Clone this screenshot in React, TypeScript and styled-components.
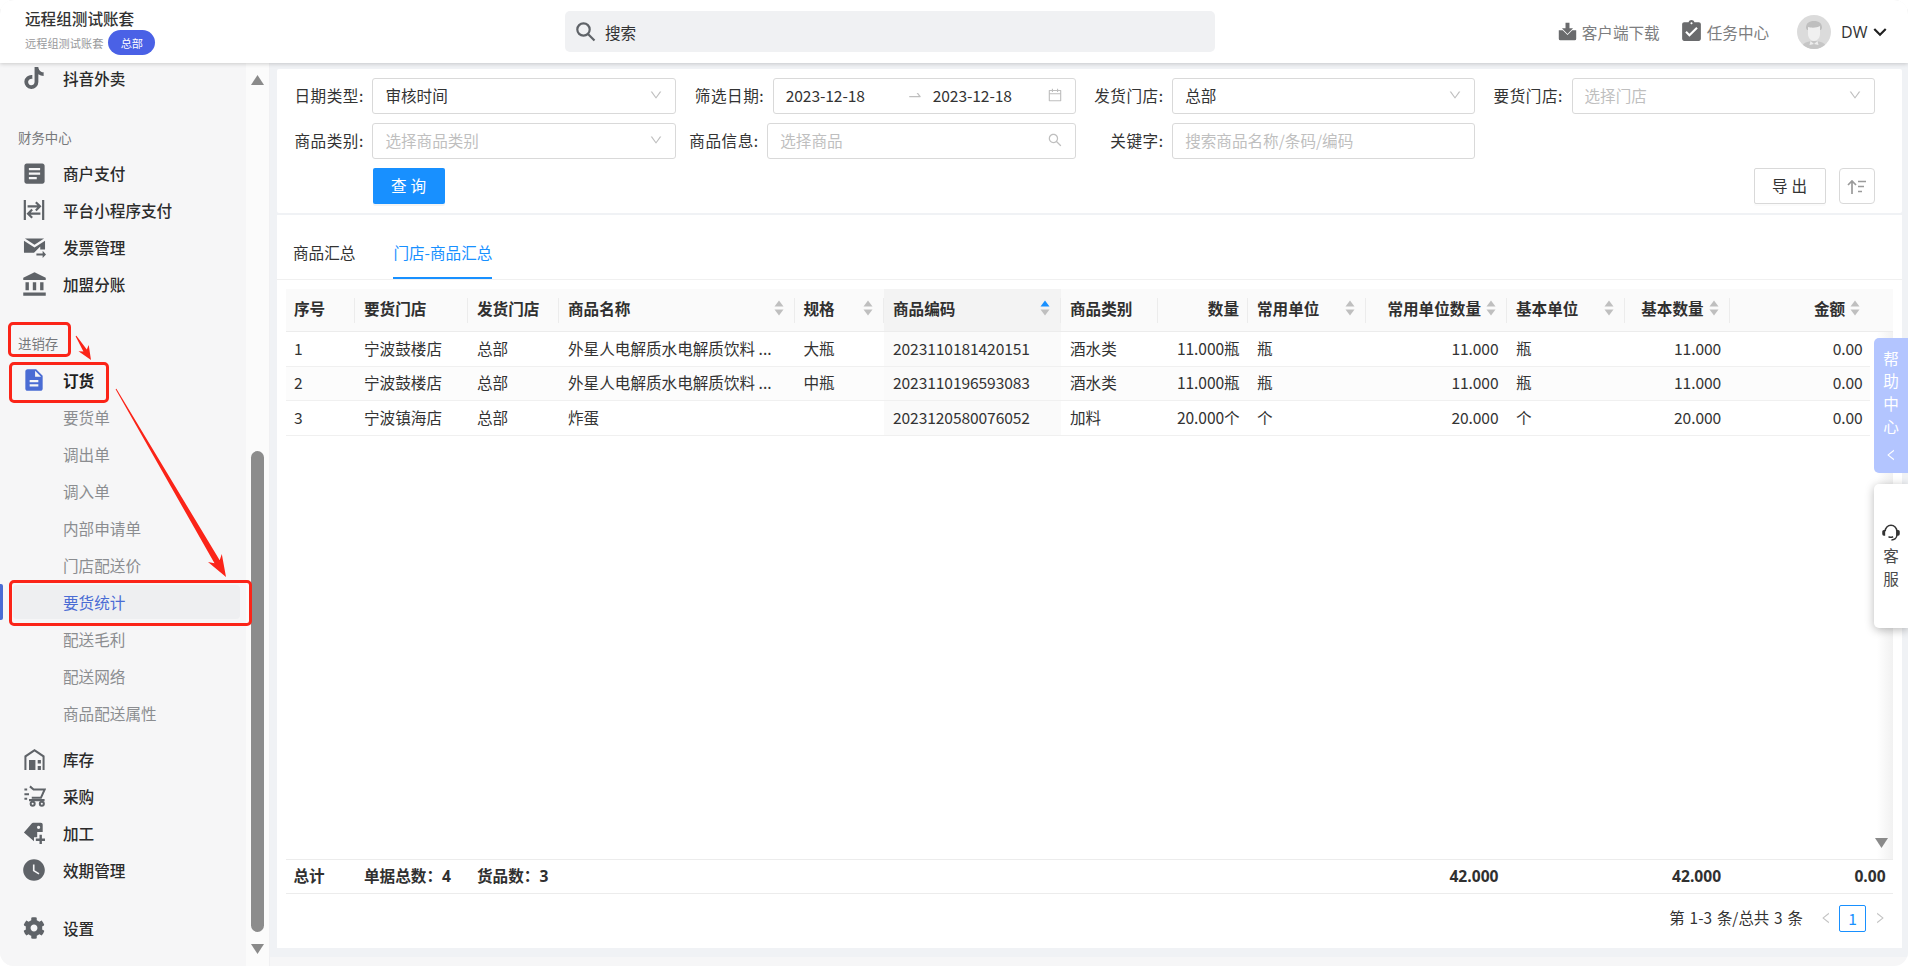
import React from "react";
import styled, { createGlobalStyle } from "styled-components";
import { FaTiktok, FaCog } from "react-icons/fa";
import {
  MdArticle,
  MdAccountBalance,
  MdDescription,
  MdWatchLater,
  MdAssignmentTurnedIn,
  MdKeyboardArrowDown,
} from "react-icons/md";
import {
  AiOutlineDown,
  AiOutlineSearch,
  AiOutlineCalendar,
  AiOutlineSwapRight,
  AiOutlineLeft,
  AiOutlineRight,
} from "react-icons/ai";

const FONT = `"Noto Sans CJK SC", "Noto Sans", sans-serif`;
const FS = "15.6px";

const Global = createGlobalStyle`
  html, body { margin: 0; padding: 0; background: #fff; overflow: hidden; }
  * { box-sizing: border-box; }
  body { font-family: ${FONT}; font-size: ${FS}; color: #262626; }
`;

const Frame = styled.div`
  position: relative;
  width: 1908px;
  height: 966px;
  background: #f6f6f7;
  border-radius: 14px;
  overflow: hidden;
  display: flex;
  flex-direction: column;
`;

/* ---------- header ---------- */
const Header = styled.header`
  position: relative;
  z-index: 2;
  flex: 0 0 63px;
  display: flex;
  align-items: flex-start;
  background: #fff;
  box-shadow: 0 1px 4px rgba(0, 0, 0, 0.18);
`;
const Brand = styled.div`
  flex: 0 0 565px;
  padding: 7px 0 0 25px;
`;
const BrandTitle = styled.div`
  font-size: 15.6px;
  line-height: 23px;
  font-weight: 500;
  color: #333;
`;
const BrandRow = styled.div`
  display: flex;
  align-items: center;
  gap: 5px;
`;
const BrandSub = styled.span`
  font-size: 11.2px;
  color: #98999b;
`;
const Badge = styled.span`
  width: 47px;
  height: 25px;
  border-radius: 13px;
  background: #4a61e6;
  color: #fff;
  font-size: 11.2px;
  display: flex;
  align-items: center;
  justify-content: center;
`;
const SearchBox = styled.div`
  flex: 0 0 650px;
  height: 41px;
  margin-top: 11px;
  background: #f0f1f3;
  border-radius: 5px;
  display: flex;
  align-items: center;
  padding-left: 10px;
  gap: 9px;
  color: #333;
  svg { color: #5f6368; }
`;
const HeaderRight = styled.div`
  margin-left: auto;
  height: 63px;
  display: flex;
  align-items: center;
  padding-right: 15.5px;
`;
const HeaderLink = styled.div<{ $gap: number; $after: number }>`
  display: flex;
  align-items: center;
  gap: ${(p) => p.$gap}px;
  margin-right: ${(p) => p.$after}px;
  color: #7d7e80;
  svg { color: #6a6b6d; flex: none; }
`;
const UserName = styled.span`
  margin-left: 10px;
  font-weight: 500;
  color: #333;
  font-family: "Open Sans", ${FONT};
  font-size: 16px;
`;
const UserChevron = styled(MdKeyboardArrowDown)`
  color: #222;
  margin-left: -1px;
`;

/* ---------- sidebar ---------- */
const Body = styled.div`
  flex: 1;
  min-height: 0;
  display: flex;
`;
const Sidebar = styled.nav`
  flex: 0 0 246px;
  overflow: hidden;
  background: #f6f6f7;
`;
const NavList = styled.div`
  margin-top: -3.5px;
`;
const NavItem = styled.div<{ $gap?: number; $strong?: boolean }>`
  height: 37px;
  margin-top: ${(p) => p.$gap ?? 0}px;
  display: flex;
  align-items: center;
  padding-left: 23px;
  font-weight: ${(p) => (p.$strong ? 700 : 500)};
  color: ${(p) => (p.$strong ? "#1f1f1f" : "#2b2b2b")};
`;
const NavIcon = styled.span<{ $blue?: boolean }>`
  flex: 0 0 22px;
  min-width: 0;
  width: 22px;
  height: 22px;
  margin-right: 18px;
  display: flex;
  align-items: center;
  justify-content: center;
  color: ${(p) => (p.$blue ? "#4a6cd4" : "#5f6368")};
  svg { flex: none; }
`;
const SectionLabel = styled.div<{ $gap: number }>`
  height: 36px;
  margin-top: ${(p) => p.$gap}px;
  padding-left: 18px;
  line-height: 36px;
  font-size: 13.4px;
  color: #76787b;
`;
const SubItem = styled.div<{ $active?: boolean }>`
  position: relative;
  height: ${(p) => (p.$active ? 34 : 37)}px;
  margin: ${(p) => (p.$active ? "1.5px 6px 1.5px 13px" : "0")};
  padding-left: ${(p) => (p.$active ? 50 : 63)}px;
  display: flex;
  align-items: center;
  border-radius: 4px;
  color: ${(p) => (p.$active ? "#4a6cd4" : "#8b8d90")};
  background: ${(p) => (p.$active ? "#eeeff1" : "transparent")};
  ${(p) =>
    p.$active
      ? `&::before { content: ""; position: absolute; left: -13px; top: -1px; bottom: -1px; width: 3px; background: #4a6cd4; border-radius: 0 2px 2px 0; }`
      : ""}
`;
const Rail = styled.div`
  flex: 0 0 23px;
  background: #fbfbfb;
  display: flex;
  flex-direction: column;
  padding: 12px 5px 0 5px;
  border-right: 1px solid #f0f0f2;
`;
const RailThumb = styled.div`
  width: 13px;
  height: 481px;
  margin: 366px 0 12px;
  border-radius: 7px;
  background: #8c8c8c;
`;

/* ---------- main ---------- */
const Main = styled.main`
  flex: 1;
  min-width: 0;
  margin-bottom: 9px;
  padding: 6px 6px 9px 7px;
  background: #f0f2f5;
  display: flex;
  flex-direction: column;
  gap: 2px;
`;
const FilterPanel = styled.section`
  flex: 0 0 144px;
  background: #fff;
  border-radius: 2px;
  padding: 9px 27.5px 9px 0;
  display: flex;
  flex-direction: column;
  gap: 9px;
`;
const FilterGrid = styled.div`
  display: grid;
  grid-template-columns: repeat(4, 1fr);
  grid-auto-rows: 36px;
  row-gap: 9px;
`;
const FormItem = styled.div`
  display: flex;
  align-items: center;
  justify-content: flex-end;
  color: #333;
`;
const Label = styled.label`
  margin-right: 8.5px;
  padding-bottom: 2px;
  white-space: nowrap;
  letter-spacing: 0.55px;
`;
const Control = styled.div<{ $w: number; $placeholder?: boolean }>`
  width: ${(p) => p.$w}px;
  height: 36px;
  border: 1px solid #d9d9d9;
  border-radius: 3px;
  padding: 0 12px 2px;
  display: flex;
  align-items: center;
  justify-content: space-between;
  color: ${(p) => (p.$placeholder ? "#bfbfbf" : "#333")};
  background: #fff;
  svg { color: #bfbfbf; flex: none; }
`;
const DateText = styled.span`
  flex: 0 0 120px;
  letter-spacing: -0.1px;
`;
const DateArrow = styled.span`
  flex: 0 0 18px;
  margin-right: 9px;
  display: flex;
  justify-content: center;
`;
const DateEnd = styled(DateText)`
  flex: 1;
`;
const ActionRow = styled.div`
  display: flex;
  align-items: center;
  padding-left: 95.5px;
`;
const PrimaryButton = styled.button`
  width: 72px;
  height: 36px;
  border: 0;
  border-radius: 2px;
  background: #1890ff;
  color: #fff;
  font: inherit;
  letter-spacing: 4px;
  padding: 0 0 2px 4px;
  box-shadow: 0 2px 0 rgba(0, 0, 0, 0.045);
`;
const GhostButton = styled.button`
  width: 72px;
  height: 36px;
  margin-left: auto;
  border: 1px solid #d9d9d9;
  border-radius: 2px;
  background: #fff;
  color: #333;
  font: inherit;
  letter-spacing: 4px;
  padding: 0 0 2px 4px;
  box-shadow: 0 2px 0 rgba(0, 0, 0, 0.016);
`;
const IconButton = styled.button`
  width: 36px;
  height: 36px;
  margin-left: 13px;
  border: 1px solid #d9d9d9;
  border-radius: 4px;
  background: #fff;
  padding: 0;
  display: flex;
  align-items: center;
  justify-content: center;
`;

const ResultPanel = styled.section`
  flex: 1;
  min-height: 0;
  background: #fff;
  display: flex;
  flex-direction: column;
`;
const Tabs = styled.div`
  flex: 0 0 64px;
  display: flex;
  gap: 38px;
  padding-left: 16px;
  border-bottom: 1px solid #f0f0f0;
`;
const Tab = styled.div<{ $active?: boolean }>`
  height: 64px;
  padding-top: 12px;
  display: flex;
  align-items: center;
  color: ${(p) => (p.$active ? "#1890ff" : "#333")};
  border-bottom: 2px solid ${(p) => (p.$active ? "#1890ff" : "transparent")};
`;
const TableArea = styled.div`
  position: relative;
  flex: 1;
  min-height: 0;
  margin: 9px 9px 0;
  overflow: hidden;
`;
const Table = styled.table`
  width: 1608px;
  table-layout: fixed;
  border-collapse: separate;
  border-spacing: 0;
`;
const Th = styled.th<{ $sorted?: boolean; $plain?: boolean; $pad: number }>`
  position: relative;
  height: 43px;
  padding: 0 ${(p) => p.$pad}px 4px 9px;
  background: ${(p) => (p.$sorted ? "#f3f3f3" : "#fafafa")};
  border-bottom: 1px solid #ececec;
  font-weight: 700;
  color: #303030;
  white-space: nowrap;
  text-align: left;
  &:first-child { padding-left: 8px; }
  ${(p) =>
    p.$plain
      ? ""
      : `&::after { content: ""; position: absolute; right: 0; top: 9px; height: 25px; width: 1px; background: #ececec; }`}
`;
const ThInner = styled.div<{ $right?: boolean; $spread?: boolean }>`
  display: flex;
  align-items: center;
  justify-content: ${(p) => (p.$spread ? "space-between" : p.$right ? "flex-end" : "flex-start")};
  gap: 5px;
`;
const Td = styled.td<{ $right?: boolean; $sorted?: boolean; $alt?: boolean; $blank?: boolean }>`
  height: 34.67px;
  padding: 0 8.5px 2px 9px;
  text-align: ${(p) => (p.$right ? "right" : "left")};
  white-space: nowrap;
  overflow: hidden;
  color: #333;
  letter-spacing: ${(p) => (p.$right || p.$sorted ? "-0.1px" : "0")};
  background: ${(p) => (p.$blank ? "transparent" : p.$sorted ? "#fafafa" : p.$alt ? "#fcfcfc" : "#fff")};
  border-bottom: ${(p) => (p.$blank ? "0" : "1px solid #f0f0f0")};
  &:first-child { padding-left: 8px; }
`;
const ScrollStrip = styled.div`
  position: absolute;
  right: 0;
  top: 43px;
  bottom: 0;
  width: 23px;
  background: linear-gradient(90deg, #fff 30%, #f1f1f1 100%);
  display: flex;
  flex-direction: column;
  justify-content: flex-end;
  align-items: center;
  padding-bottom: 11px;
`;
const Summary = styled.div`
  flex: 0 0 35px;
  margin: 0 9px;
  padding-bottom: 2px;
  display: grid;
  grid-template-columns: 69px 113px 91px 235.5px 89.5px 177px 97px 90px 117.6px 141.4px 117.6px 105px 164.5px;
  align-items: center;
  border-top: 1px solid #ececec;
  border-bottom: 1px solid #ececec;
  font-weight: 700;
  color: #303030;
`;
const SummaryCell = styled.div<{ $right?: boolean; $col?: number }>`
  padding: 0 8.5px 0 9px;
  white-space: nowrap;
  text-align: ${(p) => (p.$right ? "right" : "left")};
  ${(p) => (p.$col ? `grid-column: ${p.$col};` : "")}
  font-family: "Open Sans", ${FONT};
  &:first-child { padding-left: 7.5px; }
`;
const Pager = styled.div`
  flex: 0 0 54px;
  margin-right: 9px;
  padding-bottom: 6px;
  display: flex;
  align-items: center;
  justify-content: flex-end;
  color: #333;
`;
const PagerText = styled.span`
  margin-right: 9px;
  font-size: 15.4px;
  word-spacing: 1.5px;
  padding-bottom: 2px;
`;
const PagerArrow = styled.span`
  width: 27px;
  display: flex;
  justify-content: center;
  color: #c4c4c4;
`;
const PageBox = styled.span`
  width: 27px;
  height: 27px;
  border: 1px solid #1890ff;
  border-radius: 2px;
  color: #1890ff;
  display: flex;
  align-items: center;
  justify-content: center;
`;

/* ---------- floating tabs ---------- */
const HelpTab = styled.div`
  position: absolute;
  right: 0;
  top: 338px;
  width: 34px;
  height: 135px;
  padding-top: 8.5px;
  background: #b3c5ff;
  border-radius: 5px 0 0 5px;
  color: #fff;
  display: flex;
  flex-direction: column;
  align-items: center;
  z-index: 3;
`;
const HelpChevron = styled(AiOutlineLeft)`
  margin-top: 11px;
`;
const StackText = styled.div`
  width: 16px;
  line-height: 22.7px;
  text-align: center;
  word-break: break-all;
`;
const ServiceTab = styled.div`
  position: absolute;
  right: 0;
  top: 484px;
  width: 34px;
  height: 144px;
  background: #fff;
  border-radius: 5px 0 0 5px;
  box-shadow: 0 2px 10px rgba(0, 0, 0, 0.28);
  color: #4a4a4a;
  display: flex;
  flex-direction: column;
  align-items: center;
  justify-content: center;
  z-index: 3;
  svg { color: #333; margin-bottom: 2px; }
`;

/* ---------- red annotations ---------- */
const RedBox = styled.div<{ $x: number; $y: number; $w: number; $h: number }>`
  position: absolute;
  left: ${(p) => p.$x}px;
  top: ${(p) => p.$y}px;
  width: ${(p) => p.$w}px;
  height: ${(p) => p.$h}px;
  border: 3.5px solid #fb2418;
  border-radius: 5px;
  z-index: 4;
  pointer-events: none;
`;
const ArrowLayer = styled.svg`
  position: absolute;
  left: 0;
  top: 0;
  z-index: 4;
  pointer-events: none;
`;

/* ---------- drawings ---------- */
function arrowPoints(x1: number, y1: number, x2: number, y2: number, tail: number, neck: number, head: number, len: number) {
  const d = Math.hypot(x2 - x1, y2 - y1);
  const ux = (x2 - x1) / d;
  const uy = (y2 - y1) / d;
  const nx = -uy;
  const ny = ux;
  const bx = x2 - ux * len;
  const by = y2 - uy * len;
  const nbx = x2 - ux * len * 0.8;
  const nby = y2 - uy * len * 0.8;
  const pts = [
    [x1 + (nx * tail) / 2, y1 + (ny * tail) / 2],
    [nbx + (nx * neck) / 2, nby + (ny * neck) / 2],
    [bx + (nx * head) / 2, by + (ny * head) / 2],
    [x2, y2],
    [bx - (nx * head) / 2, by - (ny * head) / 2],
    [nbx - (nx * neck) / 2, nby - (ny * neck) / 2],
    [x1 - (nx * tail) / 2, y1 - (ny * tail) / 2],
  ];
  return pts.map((p) => p.map((v) => v.toFixed(1)).join(",")).join(" ");
}

const PayIcon = () => (
  <svg width="22" height="22" viewBox="0 0 24 24" fill="none" stroke="currentColor" strokeWidth="2.4">
    <path d="M2 1v22M22 1v22" />
    <path d="M5 8h13.500M14 3.500 18.500 8 14 12.500" />
    <path d="M19 16H5.500M10 11.500 5.500 16 10 20.500" />
  </svg>
);
const InvoiceIcon = () => (
  <svg width="23" height="23" viewBox="0 0 24 24" fill="currentColor">
    <path d="M2 2.500h20L12 9z" />
    <path d="M1 5l11 7 11-7v9h-5v-3l-6.500 6.500H1z" />
    <path d="M14 18.200h6.500v-2.700l3.500 3.800-3.500 3.700v-2.700H14z" />
  </svg>
);
const StockIcon = () => (
  <svg width="23" height="22" viewBox="0 0 24 24" fill="currentColor">
    <path d="M1 24V8.500L12 1l11 7.500V24h-2.200V9.700L12 3.700 3.200 9.700V24z" />
    <path d="M6 13h7v11H6zM15.500 13H19v4h-3.500zM15.500 19.500H19V24h-3.500z" />
  </svg>
);
const CartIcon = () => (
  <svg width="23" height="22" viewBox="0 0 24 24" fill="none" stroke="currentColor" strokeWidth="2.2">
    <path d="M1 5h3M1 10h5M1 15h3" />
    <path d="M7 1.500l4 3.500h12l-4 9H9" />
    <path d="M6 16.500h17" />
    <circle cx="10" cy="20.500" r="2.200" />
    <circle cx="20" cy="20.500" r="2.200" />
  </svg>
);
const TagPlusIcon = () => (
  <svg width="22" height="22" viewBox="0 0 24 24" fill="currentColor">
    <path fillRule="evenodd" d="M1 11.500 9.500 1.500a2 2 0 0 1 1.500-.7h8.500A2 2 0 0 1 21.500 2.800V11h-6v5.500h-3.500V21zM17 4a1.800 1.800 0 1 0 0 3.600A1.800 1.800 0 0 0 17 4z" />
    <path d="M18 14h2.600v4h3.400v2.600h-3.400V24H18v-3.400h-4V18h4z" />
  </svg>
);
const DownloadIcon = () => (
  <svg width="19" height="19" viewBox="0 0 24 24" fill="currentColor">
    <path d="M1 10.500h5l6 6 6-6h5V21a2 2 0 0 1-2 2H3a2 2 0 0 1-2-2z" />
    <path d="M9.500 1h5v7h4.500l-7 7-7-7h4.500z" />
  </svg>
);
const SortLinesIcon = () => (
  <svg width="20" height="15" viewBox="0 0 20 15" fill="none" stroke="#9a9a9a" strokeWidth="1.7">
    <path d="M5 15V2M1 6l4-4 4 4" />
    <path d="M11 2.500h8M11 7.500h6M11 12.500h4" />
  </svg>
);
const HeadsetIcon = () => (
  <svg width="20" height="20" viewBox="0 0 24 24" fill="none" stroke="currentColor" strokeWidth="1.8">
    <path d="M5 11a7 7 0 0 1 14 0v5c0 3.500-3 5.500-6.500 5.500" />
    <path d="M9 17.500c1.500 1 4 1 5.500 0" />
    <path d="M1.500 11.500a2 2 0 0 1 2-2H5v7H3.500a2 2 0 0 1-2-2zM22.500 11.500a2 2 0 0 0-2-2H19v7h1.500a2 2 0 0 0 2-2z" fill="currentColor" stroke="none" />
  </svg>
);
const Avatar = () => (
  <svg width="34" height="34" viewBox="0 0 34 34">
    <defs>
      <clipPath id="avatar-clip">
        <circle cx="17" cy="17" r="17" />
      </clipPath>
    </defs>
    <g clipPath="url(#avatar-clip)">
      <rect width="34" height="34" fill="#dbdbdb" />
      <path d="M4 34c1-6 6-8 13-8s12 2 13 8z" fill="#c6c6c6" />
      <path d="M9 13c0-5 3-7 8-7s8 2 8 7l-1 2H10z" fill="#bfbfbf" />
      <path d="M11 12c3 1 9 1 12-1v8c0 4-3 7-6 7s-6-3-6-7z" fill="#f0f0f0" />
      <path d="M13.500 26l3.500 3 3.500-3 1 4-4.500-1-4.500 1z" fill="#ededed" />
    </g>
  </svg>
);
const SortCaret = ({ active }: { active?: boolean }) => (
  <svg width="10" height="16" viewBox="0 0 10 16">
    <path d="M5 0.500 9.500 6.500H0.500z" fill={active ? "#1890ff" : "#bfbfbf"} />
    <path d="M5 15.500 0.500 9.500H9.500z" fill="#bfbfbf" />
  </svg>
);
const Tri = ({ down }: { down?: boolean }) => (
  <svg width="13" height="10" viewBox="0 0 13 10">
    <path d={down ? "M0 0h13L6.500 10z" : "M6.500 0 13 10H0z"} fill="#8a8a8a" />
  </svg>
);

/* ---------- data ---------- */
type Col = { title: string; width: number; right?: boolean; sort?: "spread" | "tail"; sorted?: boolean };
const COLS: Col[] = [
  { title: "序号", width: 69 },
  { title: "要货门店", width: 113 },
  { title: "发货门店", width: 91 },
  { title: "商品名称", width: 235.5, sort: "spread" },
  { title: "规格", width: 89.5, sort: "spread" },
  { title: "商品编码", width: 177, sort: "spread", sorted: true },
  { title: "商品类别", width: 97 },
  { title: "数量", width: 90, right: true },
  { title: "常用单位", width: 117.6, sort: "spread" },
  { title: "常用单位数量", width: 141.4, right: true, sort: "tail" },
  { title: "基本单位", width: 117.6, sort: "spread" },
  { title: "基本数量", width: 105, right: true, sort: "tail" },
  { title: "金额", width: 141.5, right: true, sort: "tail" },
];
const ROWS: string[][] = [
  ["1", "宁波鼓楼店", "总部", "外星人电解质水电解质饮料 ...", "大瓶", "2023110181420151", "酒水类", "11.000瓶", "瓶", "11.000", "瓶", "11.000", "0.00"],
  ["2", "宁波鼓楼店", "总部", "外星人电解质水电解质饮料 ...", "中瓶", "2023110196593083", "酒水类", "11.000瓶", "瓶", "11.000", "瓶", "11.000", "0.00"],
  ["3", "宁波镇海店", "总部", "炸蛋", "", "2023120580076052", "加料", "20.000个", "个", "20.000", "个", "20.000", "0.00"],
];
const thPad = (c: Col) => (c.sort === "tail" ? 11 : c.sort === "spread" ? 11 : 9);

const Chevron = () => <AiOutlineDown size={14} />;

export default function App() {
  return (
    <Frame>
      <Global />
      <Header>
        <Brand>
          <BrandTitle>远程组测试账套</BrandTitle>
          <BrandRow>
            <BrandSub>远程组测试账套</BrandSub>
            <Badge>总部</Badge>
          </BrandRow>
        </Brand>
        <SearchBox>
          <svg width="21" height="21" viewBox="0 0 21 21" fill="none" stroke="currentColor" strokeWidth="2.2">
            <circle cx="8.500" cy="8.500" r="6.200" />
            <path d="M13 13l6.500 6.500" />
          </svg>
          <span>搜索</span>
        </SearchBox>
        <HeaderRight>
          <HeaderLink $gap={5} $after={19}>
            <DownloadIcon />
            <span>客户端下载</span>
          </HeaderLink>
          <HeaderLink $gap={3} $after={28}>
            <MdAssignmentTurnedIn size={25} />
            <span>任务中心</span>
          </HeaderLink>
          <Avatar />
          <UserName>DW</UserName>
          <UserChevron size={26} />
        </HeaderRight>
      </Header>
      <Body>
        <Sidebar>
          <NavList>
            <NavItem>
              <NavIcon><FaTiktok size={22} /></NavIcon>抖音外卖
            </NavItem>
            <SectionLabel $gap={22}>财务中心</SectionLabel>
            <NavItem>
              <NavIcon><MdArticle size={27} /></NavIcon>商户支付
            </NavItem>
            <NavItem>
              <NavIcon><PayIcon /></NavIcon>平台小程序支付
            </NavItem>
            <NavItem>
              <NavIcon><InvoiceIcon /></NavIcon>发票管理
            </NavItem>
            <NavItem>
              <NavIcon><MdAccountBalance size={27} /></NavIcon>加盟分账
            </NavItem>
            <SectionLabel $gap={22.5}>进销存</SectionLabel>
            <NavItem $strong>
              <NavIcon $blue><MdDescription size={26} /></NavIcon>订货
            </NavItem>
            <SubItem>要货单</SubItem>
            <SubItem>调出单</SubItem>
            <SubItem>调入单</SubItem>
            <SubItem>内部申请单</SubItem>
            <SubItem>门店配送价</SubItem>
            <SubItem $active>要货统计</SubItem>
            <SubItem>配送毛利</SubItem>
            <SubItem>配送网络</SubItem>
            <SubItem>商品配送属性</SubItem>
            <NavItem $gap={9}>
              <NavIcon><StockIcon /></NavIcon>库存
            </NavItem>
            <NavItem>
              <NavIcon><CartIcon /></NavIcon>采购
            </NavItem>
            <NavItem>
              <NavIcon><TagPlusIcon /></NavIcon>加工
            </NavItem>
            <NavItem>
              <NavIcon><MdWatchLater size={26} /></NavIcon>效期管理
            </NavItem>
            <NavItem $gap={21}>
              <NavIcon><FaCog size={22} /></NavIcon>设置
            </NavItem>
          </NavList>
        </Sidebar>
        <Rail>
          <Tri />
          <RailThumb />
          <Tri down />
        </Rail>
        <Main>
          <FilterPanel>
            <FilterGrid>
              <FormItem>
                <Label>日期类型:</Label>
                <Control $w={304}>审核时间<Chevron /></Control>
              </FormItem>
              <FormItem>
                <Label>筛选日期:</Label>
                <Control $w={303}>
                  <DateText>2023-12-18</DateText>
                  <DateArrow><AiOutlineSwapRight size={16} /></DateArrow>
                  <DateEnd>2023-12-18</DateEnd>
                  <AiOutlineCalendar size={16} />
                </Control>
              </FormItem>
              <FormItem>
                <Label>发货门店:</Label>
                <Control $w={303}>总部<Chevron /></Control>
              </FormItem>
              <FormItem>
                <Label>要货门店:</Label>
                <Control $w={303} $placeholder>选择门店<Chevron /></Control>
              </FormItem>
              <FormItem>
                <Label>商品类别:</Label>
                <Control $w={304} $placeholder>选择商品类别<Chevron /></Control>
              </FormItem>
              <FormItem>
                <Label>商品信息:</Label>
                <Control $w={308.5} $placeholder>选择商品<AiOutlineSearch size={16} /></Control>
              </FormItem>
              <FormItem>
                <Label>关键字:</Label>
                <Control $w={303} $placeholder>搜索商品名称/条码/编码</Control>
              </FormItem>
            </FilterGrid>
            <ActionRow>
              <PrimaryButton>查询</PrimaryButton>
              <GhostButton>导出</GhostButton>
              <IconButton><SortLinesIcon /></IconButton>
            </ActionRow>
          </FilterPanel>
          <ResultPanel>
            <Tabs>
              <Tab>商品汇总</Tab>
              <Tab $active>门店-商品汇总</Tab>
            </Tabs>
            <TableArea>
              <Table>
                <colgroup>
                  {COLS.map((c) => (
                    <col key={c.title} style={{ width: c.width }} />
                  ))}
                  <col style={{ width: 23 }} />
                </colgroup>
                <thead>
                  <tr>
                    {COLS.map((c, i) => (
                      <Th key={c.title} $sorted={c.sorted} $pad={thPad(c)} $plain={i === COLS.length - 1}>
                        <ThInner $right={c.right} $spread={c.sort === "spread"}>
                          <span>{c.title}</span>
                          {c.sort ? <SortCaret active={c.sorted} /> : null}
                        </ThInner>
                      </Th>
                    ))}
                    <Th $plain $pad={0} />
                  </tr>
                </thead>
                <tbody>
                  {ROWS.map((r, i) => (
                    <tr key={r[0]}>
                      {r.map((v, j) => (
                        <Td key={j} $right={COLS[j].right} $sorted={COLS[j].sorted} $alt={i === 1}>
                          {v}
                        </Td>
                      ))}
                      <Td $blank />
                    </tr>
                  ))}
                </tbody>
              </Table>
              <ScrollStrip>
                <Tri down />
              </ScrollStrip>
            </TableArea>
            <Summary>
              <SummaryCell>总计</SummaryCell>
              <SummaryCell>单据总数：4</SummaryCell>
              <SummaryCell>货品数：3</SummaryCell>
              <SummaryCell $right $col={10}>42.000</SummaryCell>
              <SummaryCell $right $col={12}>42.000</SummaryCell>
              <SummaryCell $right $col={13}>0.00</SummaryCell>
            </Summary>
            <Pager>
              <PagerText>第 1-3 条/总共 3 条</PagerText>
              <PagerArrow><AiOutlineLeft size={14} /></PagerArrow>
              <PageBox>1</PageBox>
              <PagerArrow><AiOutlineRight size={14} /></PagerArrow>
            </Pager>
          </ResultPanel>
        </Main>
      </Body>

      <HelpTab>
        <StackText>帮助中心</StackText>
        <HelpChevron size={14} />
      </HelpTab>
      <ServiceTab>
        <HeadsetIcon />
        <StackText>客服</StackText>
      </ServiceTab>

      <RedBox $x={8} $y={322} $w={63} $h={35} />
      <RedBox $x={9} $y={362} $w={100} $h={41} />
      <RedBox $x={9} $y={580} $w={243} $h={46} />
      <ArrowLayer width="1908" height="966">
        <polygon fill="#fb2418" points={arrowPoints(76, 336, 91, 360, 1, 4, 12, 14)} />
        <polygon fill="#fb2418" points={arrowPoints(116, 389, 226, 577, 1, 6, 16, 22)} />
      </ArrowLayer>
    </Frame>
  );
}
